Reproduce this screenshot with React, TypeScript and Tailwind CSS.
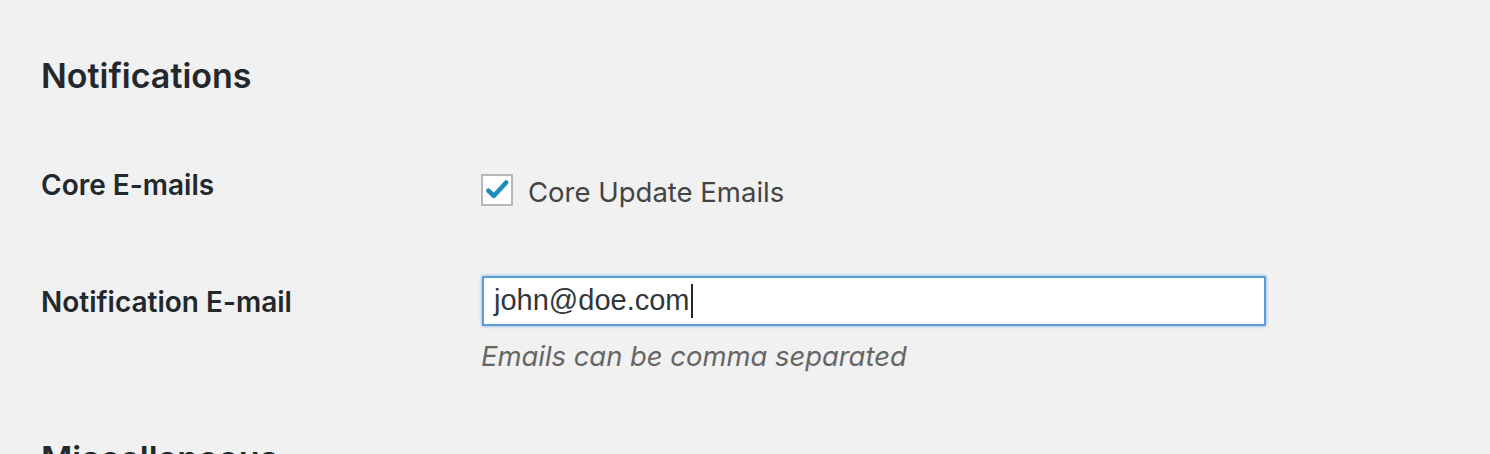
export default function App() {
    return (
        <div className="min-h-[454px] w-full bg-[#f1f1f1] px-[41px] pt-[56px] font-['Inter','Noto_Sans',sans-serif] text-[#23282d] overflow-hidden">
            <h2 className="text-[34px] leading-[40px] font-semibold">Notifications</h2>

            {/* Core E-mails */}
            <div className="mt-[73px] grid grid-cols-[440px_1fr]">
                <div className="text-[28px] leading-[32px] font-semibold">Core E-mails</div>
                <label className="flex items-start gap-[15px] mt-[5px]">
                    <span className="flex h-[32px] w-[32px] items-center justify-center border-2 border-[#b4b9be] bg-white">
                        <svg viewBox="0 0 24 24" className="h-[26px] w-[26px]">
                            <path d="M4 12.5l5 5L20.5 5" fill="none" stroke="#1e8cbe" strokeWidth="4.2" strokeLinecap="round" strokeLinejoin="round" />
                        </svg>
                    </span>
                    <span className="mt-[2px] text-[27.5px] leading-[32px] text-[#444]">Core Update Emails</span>
                </label>
            </div>

            {/* Notification E-mail */}
            <div className="mt-[68px] grid grid-cols-[440px_1fr]">
                <div className="mt-[10px] text-[28px] leading-[32px] font-semibold">Notification E-mail</div>
                <div>
                    <div className="ml-[1px] flex h-[50px] w-[784px] items-center border-2 border-[#5b9dd9] bg-white px-[10px] shadow-[0_0_3px_rgba(91,157,217,0.8)]">
                        <span className="font-['Liberation_Sans',Arial,sans-serif] text-[29px] text-[#32373c]">john@doe.com</span>
                        <span className="ml-[1px] h-[34px] w-[2px] bg-[#23282d]" />
                    </div>
                    <p className="mt-[15px] text-[27.4px] leading-[30px] italic text-[#666]">Emails can be comma separated</p>
                </div>
            </div>

            <h2 className="mt-[68px] text-[34px] leading-[40px] font-semibold">Miscellaneous</h2>
        </div>
    )
}
